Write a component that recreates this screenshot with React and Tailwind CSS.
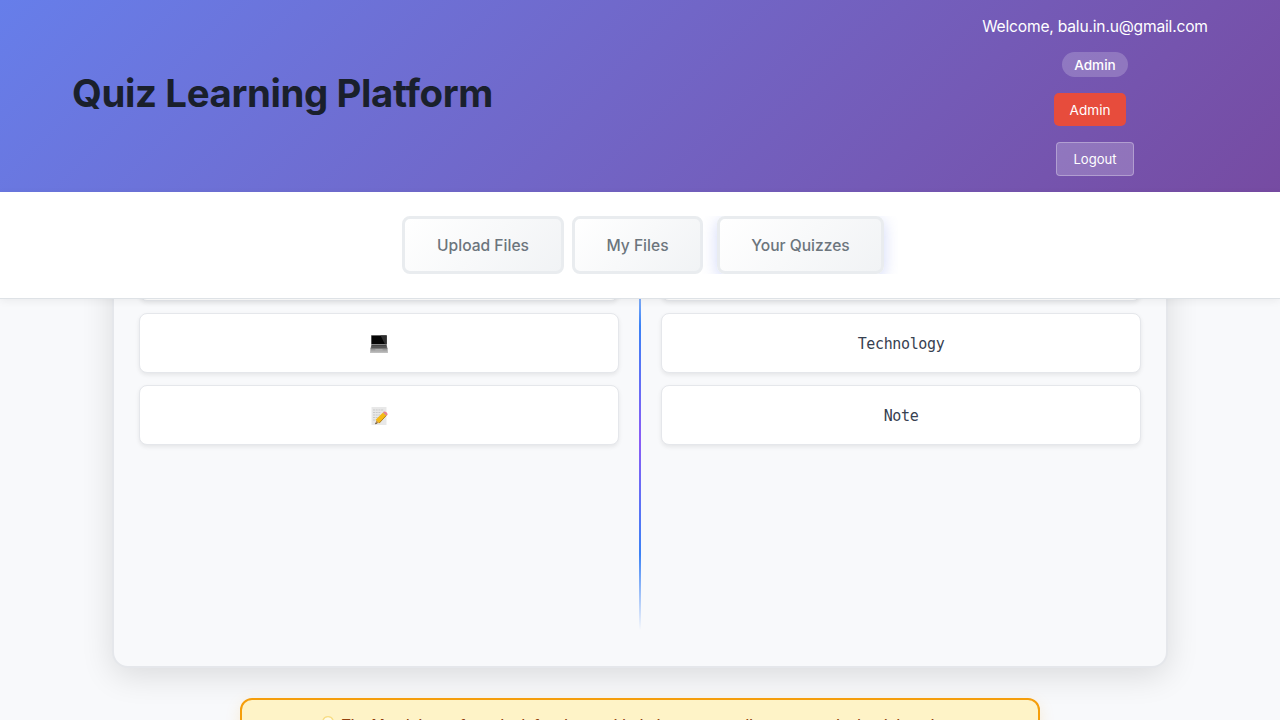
import React from "react";

const sans = "font-['Inter',sans-serif]";

function Laptop() {
  return (
    <svg width="18" height="18" viewBox="0 0 18 18" aria-label="Laptop">
      <defs>
        <linearGradient id="base" x1="0" y1="0" x2="0" y2="1">
          <stop offset="0" stopColor="#8b8b8b" />
          <stop offset="1" stopColor="#c4c4c4" />
        </linearGradient>
      </defs>
      <path d="M1 0h16v9.500H1z" fill="#a3a3a3" />
      <path d="M1.500.6h15v8.600h-15z" fill="#050505" />
      <path d="M10.500.6h6v8.600h-1.500z" fill="#2e2e2e" />
      <path d="M1.300 9.500h15.400l.8 4.500H.5z" fill="#666" />
      <path d="M2 10.500h14M1.800 12h14.400" stroke="#3f3f3f" strokeWidth=".8" />
      <path d="M.5 13.500h17L18 18H0z" fill="url(#base)" />
      <path d="M5.500 14h7l.4 2H5z" fill="#aaa" />
    </svg>
  );
}

function Memo() {
  return (
    <svg width="18" height="18" viewBox="0 0 18 18" aria-label="Memo">
      <path d="M1.500 0h15v18h-15z" fill="#e8e8e8" />
      <path d="M3 3h11M3 5.500h8M3 8h7M3 10.500h6M3 13h4" stroke="#c9c9c9" strokeWidth="1" strokeDasharray="2 .7" />
      <path d="M5.200 17.200l1.300-4L9 15.800z" fill="#b58b54" />
      <path d="M5.200 17.200l.6-1.800 1.200 1.200z" fill="#444" />
      <path d="M5.600 12.700L13 5.400l3.500 3.200-7.300 7.700z" fill="#f5b915" />
      <path d="M9.200 16.100l7-7.500" stroke="#a87716" strokeWidth=".9" />
      <path d="M13 5.600l.9-.9 3.400 3.100-1 1z" fill="#a5a5a5" />
      <path d="M14 5.200c.9-.9 3.600 1.400 2.800 2.600z" fill="#ef7f8b" stroke="#ef7f8b" strokeWidth="1.100" />
    </svg>
  );
}

function Bulb() {
  return (
    <svg width="18" height="18" viewBox="0 0 18 18" className="shrink-0" aria-label="Light bulb">
      <path d="M9 .7a5.300 5.300 0 0 0-3 9.700c1 .8 1 1.600 1.100 2.600h3.800c.1-1 .1-1.800 1.100-2.600A5.300 5.300 0 0 0 9 .7z" fill="#fffbe6" stroke="#f7dd85" strokeWidth="1.300" />
      <path d="M7 14h4v3H7z" fill="#aaa" />
    </svg>
  );
}

function Card({ children }) {
  return (
    <div className="flex h-[60px] shrink-0 items-center justify-center rounded-lg border border-[#e5e7eb] bg-white pt-0.5 font-['DejaVu_Sans_Mono',monospace] text-[15px] tracking-[-0.36px] text-[#374151] shadow-[0_2px_4px_rgba(0,0,0,0.08)]">
      {children}
    </div>
  );
}

const tab =
  "flex h-[58px] items-center justify-center rounded-lg border-3 border-[#e9ecef] bg-linear-135 from-white to-[#f1f3f5] pt-0.5 text-[15.6px] font-medium text-[#6c757d]";

export default function App() {
  return (
    <div className={`flex h-[720px] w-full flex-col overflow-hidden bg-[#f8f9fb] ${sans}`}>
      <header className="flex h-48 shrink-0 items-center justify-between bg-linear-135 from-[#667eea] to-[#764ba2] px-[72px]">
        <h1 className="pb-1.5 text-[38.4px] leading-none font-bold tracking-[-0.38px] text-[#1a202c]">
          Quiz Learning Platform
        </h1>
        <div className="flex w-[226px] flex-col items-center gap-4 text-white">
          <span className="h-5 text-[15.6px] leading-[22px] tracking-[-0.19px] whitespace-nowrap">Welcome, balu.in.u@gmail.com</span>
          <span className="flex h-[25px] w-[66px] items-center justify-center rounded-full bg-white/20 pt-0.5 text-[13.6px] font-medium">
            Admin
          </span>
          <button className="mr-2.5 h-[33px] w-[72px] rounded-[5px] bg-[#e74c3c] pt-0.5 text-[13.6px]">Admin</button>
          <button className="h-[34px] w-[78px] rounded border border-white/30 bg-white/20 pt-0.5 text-[13.1px]">
            Logout
          </button>
        </div>
      </header>

      <nav className="z-10 flex h-[107px] shrink-0 justify-center border-b border-[#dee2e6] bg-white pt-6 shadow-[0_2px_8px_rgba(0,0,0,0.06)]">
        <div className="ml-5 flex h-[58px] gap-2 overflow-hidden pr-3.5">
          <button className={`${tab} w-[162px]`}>Upload Files</button>
          <button className={`${tab} w-[131px]`}>My Files</button>
          <button className={`${tab} ml-1.5 w-[167px] shadow-[0_4px_15px_rgba(102,126,234,0.3)]`}>
            Your Quizzes
          </button>
        </div>
      </nav>

      <main className="flex h-[421px] flex-col items-center overflow-hidden">
        <section className="-mt-[102px] flex h-[471px] w-[1056px] shrink-0 justify-center gap-5 rounded-2xl border-2 border-[#e5e7eb] bg-[#f8f9fb] pt-[42px] shadow-[0_8px_32px_rgba(0,0,0,0.12)]">
          <div className="flex w-[480px] flex-col gap-3">
            <Card />
            <Card><Laptop /></Card>
            <Card><Memo /></Card>
          </div>
          <div className="mt-[9px] h-[380px] w-0.5 shrink-0 bg-[linear-gradient(to_bottom,transparent_0%,#3b82f6_20%,#8b5cf6_50%,#3b82f6_80%,transparent_100%)]" />
          <div className="flex w-[480px] flex-col gap-3">
            <Card />
            <Card>Technology</Card>
            <Card>Note</Card>
          </div>
        </section>

        <aside className="mt-[30px] flex h-[60px] w-[800px] shrink-0 items-start justify-center gap-1 rounded-xl border-2 border-[#f59e0b] bg-[#fef3c7] pt-4 pl-1 text-[14.4px] leading-[23px] font-medium whitespace-nowrap text-[#92400e] shadow-[0_4px_15px_rgba(245,158,11,0.15)]">
          <Bulb />
          <span className="-mt-[3px]">
            Tip: Match items from the left column with their corresponding answers in the right column
          </span>
        </aside>
      </main>
    </div>
  );
}
